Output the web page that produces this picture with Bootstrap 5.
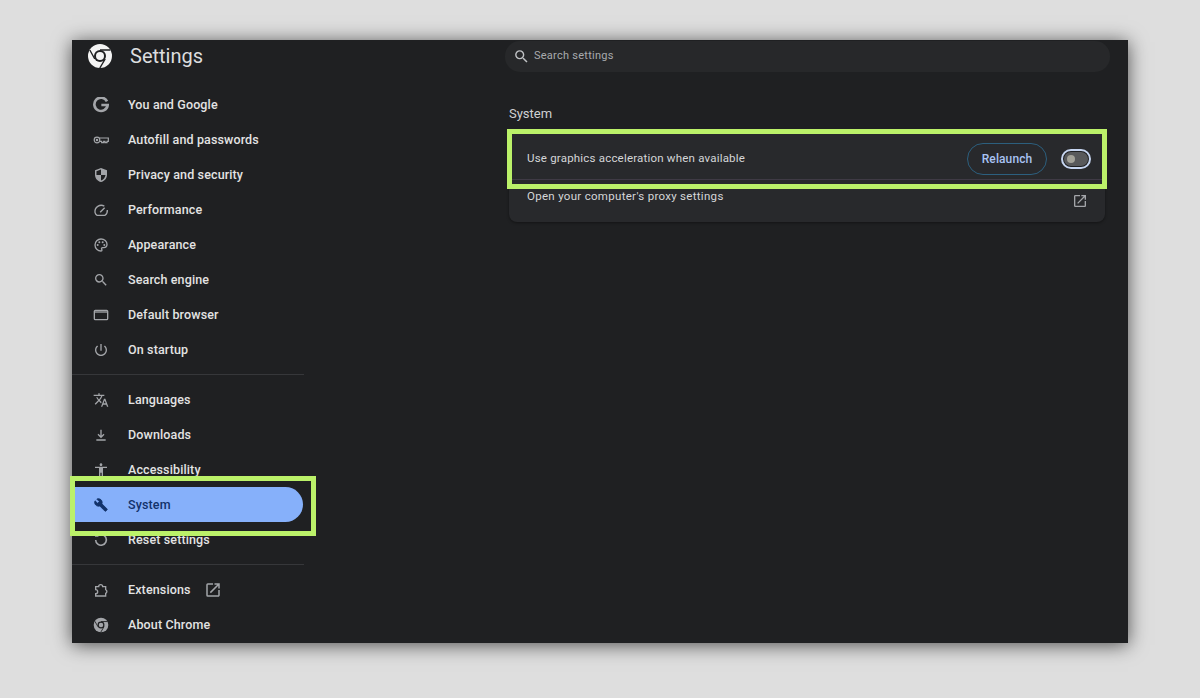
<!DOCTYPE html>
<html lang="en">

<head>
  <meta charset="UTF-8" />
  <meta name="viewport" content="width=device-width, initial-scale=1.0" />
  <title>Settings - System</title>
  <link href="https://cdn.jsdelivr.net/npm/bootstrap@5.3.2/dist/css/bootstrap.min.css" rel="stylesheet" />
  <style>
    html, body { height: 100%; overflow: hidden; }
    body { background: #dedede; font-family: Roboto, "Liberation Sans", sans-serif; padding: 40px 72px 0; }
    .app { height: 603px; background: #1f2022; box-shadow: 0 2px 18px rgba(0, 0, 0, .65); }
    .side { width: 232px; flex: none; }
    .brand { height: 47px; padding: 4px 0 0 16px; gap: 18px; color: #dcdddf; font-size: 20px; line-height: 24px; }
    .side-link { height: 35px; padding: 2px 0 0 21px; color: #e3e3e3; font-size: 12.5px; font-weight: 500; letter-spacing: .13px; text-decoration: none; }
    .side-link svg.ic { width: 16px; height: 16px; margin: -2px 19px 0 0; flex: none; color: #a3a5a9; }
    .side-link.active { margin-right: 1px; background: #86b0fa; color: #12326a; }
    .side-link.active svg.ic { color: #12326a; }
    .side-link .ext { width: 18px; height: 18px; margin: -2px 0 0 13px; color: #a3a5a9; }
    .side hr { margin: 7px 0 7px; border-color: #36373a; opacity: 1; }
    .main-col { padding: 1px 18px 0 201px; min-width: 0; }
    .search { height: 31px; background: #27282a; border-radius: 15px; padding-left: 8px; gap: 4px; color: #a8aaad; font-size: 11px; letter-spacing: .25px; }
    .search svg { width: 17px; height: 17px; margin-top: -1px; color: #c0c2c5; }
    .sec-title { margin: 33px 0 0 4px; height: 27px; color: #cfd0d2; font-size: 13px; line-height: 17px; }
    .set-card { margin: 0 5px 0 4px; height: 90px; background: #28292c; border: 0; border-radius: 8px; box-shadow: 0 1px 3px rgba(0, 0, 0, .4); color: #d5d6d8; font-size: 11.5px; }
    .set-row { height: 48px; padding: 7px 14px 0 18px; border-bottom: 1px solid #3f3a45; letter-spacing: .2px; }
    .set-row2 { padding: 9px 17px 0 18px; line-height: 15px; letter-spacing: .3px; }
    .set-row2 svg { width: 16px; height: 16px; margin-top: 4px; color: #a3a5a9; }
    .btn-relaunch { width: 80px; height: 32px; margin-right: 14px; padding: 0; border: 1px solid #2c5f7e; border-radius: 16px; background: transparent; color: #a8c3f3; font-size: 12px; font-weight: 500; letter-spacing: .1px; }
    .toggle { width: 30px; height: 20px; border: 2px solid #c6d5f0; border-radius: 10px; background: #1f2022; padding: 1px; }
    .toggle i { display: block; height: 100%; border-radius: 7px; background: #58595b; padding: 3px; }
    .toggle b { display: block; width: 8px; height: 8px; border-radius: 50%; background: #a3a299; }
    .hl-box { position: absolute; border: 5px solid #bbf169; pointer-events: none; }
    .hl-nav { left: -2px; top: 436px; width: 246px; height: 60px; }
    .hl-row { left: 435px; top: 89px; width: 600px; height: 60px; }
  </style>
</head>

<body>
  <div class="app d-flex position-relative">
    <!-- Sidebar -->
    <nav class="side d-flex flex-column">
      <div class="brand d-flex align-items-start">
        <svg width="24" height="24" viewBox="0 0 24 24">
          <circle cx="12" cy="12" r="12" fill="#f4f4f4" />
          <circle cx="12" cy="12" r="6" fill="#1f2022" />
          <circle cx="12" cy="12" r="4" fill="#f4f4f4" />
          <path d="M12 6H22.400M6.800 15L1.800 6M17.200 15L11.800 24" stroke="#1f2022" stroke-width="1.400" fill="none" />
        </svg>
        <span>Settings</span>
      </div>

      <a class="side-link d-flex align-items-center" href="#">
        <svg class="ic" viewBox="0 0 24 24" fill="none" stroke="currentColor" stroke-width="4"><path d="M21 6.500A10 10 0 1 0 22 12H12.500" /></svg>
        You and Google</a>
      <a class="side-link d-flex align-items-center" href="#">
        <svg class="ic" viewBox="0 0 24 24" fill="none" stroke="currentColor" stroke-width="1.800"><circle cx="6" cy="12" r="4.200" /><circle cx="6" cy="12" r="1" /><path d="M10 9h13v5h-2v2h-3v-2h-2v2h-3v-2h-3" /></svg>
        Autofill and passwords</a>
      <a class="side-link d-flex align-items-center" href="#">
        <svg class="ic" viewBox="0 0 24 24" fill="currentColor"><path d="M12 1.500L3 5v6.500c0 5.200 3.800 9.900 9 11 5.200-1.100 9-5.800 9-11V5l-9-3.500zm0 10.500h6.800c-.6 3.900-3.200 7.200-6.800 8.300V12H5.200V6.500L12 3.900V12z" /></svg>
        Privacy and security</a>
      <a class="side-link d-flex align-items-center" href="#">
        <svg class="ic" viewBox="0 0 24 24" fill="none" stroke="currentColor" stroke-width="2"><path d="M6 20h12a9 9 0 0 0 3.500-8M17 6.200A9.500 9.500 0 0 0 3 15.500c.4 1.700 1.300 3.300 3 4.500" /><path d="M10.800 15.500L17.500 8.500" /></svg>
        Performance</a>
      <a class="side-link d-flex align-items-center" href="#">
        <svg class="ic" viewBox="0 0 24 24" fill="none" stroke="currentColor" stroke-width="2"><path d="M12 3a9 9 0 0 0 0 18c.83 0 1.500-.67 1.500-1.500 0-.39-.15-.74-.39-1.010-.23-.26-.38-.61-.38-.99 0-.83.67-1.500 1.500-1.500H16c2.760 0 5-2.240 5-5 0-4.420-4.030-8-9-8z" /><g fill="currentColor" stroke="none"><circle cx="7" cy="12" r="1.500" /><circle cx="9.500" cy="8" r="1.500" /><circle cx="14.500" cy="8" r="1.500" /><circle cx="17" cy="12" r="1.500" /></g></svg>
        Appearance</a>
      <a class="side-link d-flex align-items-center" href="#">
        <svg class="ic" viewBox="0 0 24 24" fill="currentColor"><path d="M15.500 14h-.79l-.28-.27A6.471 6.471 0 0 0 16 9.500 6.500 6.500 0 1 0 9.500 16c1.610 0 3.090-.59 4.230-1.570l.27.28v.79l5 4.990L20.490 19l-4.990-5zm-6 0C7.010 14 5 11.990 5 9.500S7.010 5 9.500 5 14 7.010 14 9.500 11.990 14 9.500 14z" /></svg>
        Search engine</a>
      <a class="side-link d-flex align-items-center" href="#">
        <svg class="ic" viewBox="0 0 24 24" fill="none" stroke="currentColor" stroke-width="2"><rect x="2" y="5" width="20" height="14" rx="1.500" /><path d="M2 7.500h20" /></svg>
        Default browser</a>
      <a class="side-link d-flex align-items-center" href="#">
        <svg class="ic" viewBox="0 0 24 24" fill="currentColor"><path d="M13 3h-2v10h2V3zm4.830 2.170l-1.420 1.420C17.990 7.860 19 9.810 19 12c0 3.870-3.130 7-7 7s-7-3.130-7-7c0-2.190 1.010-4.140 2.580-5.420L6.170 5.170C4.230 6.820 3 9.260 3 12c0 4.970 4.030 9 9 9s9-4.030 9-9c0-2.740-1.230-5.180-3.170-6.830z" /></svg>
        On startup</a>

      <hr />

      <a class="side-link d-flex align-items-center" href="#">
        <svg class="ic" viewBox="0 0 24 24" fill="currentColor"><path d="M12.870 15.070l-2.540-2.510.03-.03c1.740-1.940 2.980-4.170 3.710-6.530H17V4h-7V2H8v2H1v1.990h11.170C11.500 7.920 10.440 9.750 9 11.350 8.070 10.320 7.300 9.190 6.690 8h-2c.73 1.630 1.730 3.170 2.980 4.560l-5.090 5.020L4 19l5-5 3.110 3.110.76-2.040zM18.500 10h-2L12 22h2l1.120-3h4.750L21 22h2l-4.500-12zm-2.620 7l1.620-4.330L19.120 17h-3.240z" /></svg>
        Languages</a>
      <a class="side-link d-flex align-items-center" href="#">
        <svg class="ic" viewBox="0 0 24 24" fill="none" stroke="currentColor" stroke-width="2"><path d="M12 4v11M7.500 11l4.500 4.500 4.500-4.500M5 19.500h14" /></svg>
        Downloads</a>
      <a class="side-link d-flex align-items-center" href="#">
        <svg class="ic" viewBox="0 0 24 24" fill="currentColor"><path d="M12 2c1.100 0 2 .9 2 2s-.9 2-2 2-2-.9-2-2 .9-2 2-2zm9 7h-6v13h-2v-6h-2v6H9V9H3V7h18v2z" /></svg>
        Accessibility</a>
      <a class="side-link active d-flex align-items-center rounded-end-pill" href="#">
        <svg class="ic" viewBox="-2 -2 28 28" fill="currentColor" stroke="currentColor" stroke-width="1.500"><path d="M22.700 19l-9.100-9.100c.9-2.300.4-5-1.500-6.900-2-2-5-2.400-7.400-1.300L9 6 6 9 1.600 4.700C.4 7.100.9 10.100 2.900 12.100c1.900 1.900 4.600 2.400 6.900 1.500l9.100 9.100c.4.400 1 .4 1.400 0l2.300-2.300c.5-.4.5-1.100.1-1.400z" /></svg>
        System</a>
      <a class="side-link d-flex align-items-center" href="#">
        <svg class="ic" viewBox="0 0 24 24" fill="none" stroke="currentColor" stroke-width="2.400"><path d="M7 5.500a8 8 0 1 1-3 6.500M7 2v4H3" /></svg>
        Reset settings</a>

      <hr />

      <a class="side-link d-flex align-items-center" href="#">
        <svg class="ic" viewBox="0 0 24 24" fill="none" stroke="currentColor" stroke-width="2"><path d="M4 7h4.500a3 3 0 0 1 6 0H19v4.500a3 3 0 0 1 0 5.500v4H4v-3.500a3 3 0 0 0 0-6z" /></svg>
        Extensions
        <svg class="ext" viewBox="0 0 24 24" fill="currentColor"><path d="M19 19H5V5h7V3H5a2 2 0 0 0-2 2v14a2 2 0 0 0 2 2h14c1.100 0 2-.9 2-2v-7h-2v7zM14 3v2h3.590l-9.830 9.830 1.410 1.410L19 6.410V10h2V3h-7z" /></svg>
      </a>
      <a class="side-link d-flex align-items-center" href="#">
        <svg class="ic" viewBox="0 0 24 24">
          <circle cx="12" cy="12" r="11" fill="currentColor" />
          <circle cx="12" cy="12" r="5.200" fill="#1f2022" />
          <circle cx="12" cy="12" r="3.400" fill="currentColor" />
          <path d="M12 6.800H22M7.500 14.600L2.800 6.400M16.500 14.600L11.500 23" stroke="#1f2022" stroke-width="1.300" fill="none" />
        </svg>
        About Chrome</a>
    </nav>

    <!-- Main column -->
    <main class="main-col flex-grow-1">
      <div class="search d-flex align-items-center">
        <svg viewBox="0 0 24 24" fill="currentColor"><path d="M15.500 14h-.79l-.28-.27A6.471 6.471 0 0 0 16 9.500 6.500 6.500 0 1 0 9.500 16c1.610 0 3.090-.59 4.230-1.570l.27.28v.79l5 4.990L20.490 19l-4.990-5zm-6 0C7.010 14 5 11.990 5 9.500S7.010 5 9.500 5 14 7.010 14 9.500 11.990 14 9.500 14z" /></svg>
        <span>Search settings</span>
      </div>

      <div class="sec-title">System</div>

      <div class="card set-card">
        <div class="set-row d-flex align-items-center">
          <span class="flex-grow-1">Use graphics acceleration when available</span>
          <button type="button" class="btn btn-relaunch">Relaunch</button>
          <span class="toggle"><i><b></b></i></span>
        </div>
        <div class="set-row2 d-flex justify-content-between">
          <span>Open your computer's proxy settings</span>
          <svg viewBox="0 0 24 24" fill="currentColor"><path d="M19 19H5V5h7V3H5a2 2 0 0 0-2 2v14a2 2 0 0 0 2 2h14c1.100 0 2-.9 2-2v-7h-2v7zM14 3v2h3.590l-9.830 9.830 1.410 1.410L19 6.410V10h2V3h-7z" /></svg>
        </div>
      </div>
    </main>

    <!-- Highlight boxes over the screenshot -->
    <div class="hl-box hl-nav"></div>
    <div class="hl-box hl-row"></div>
  </div>

  <script src="https://cdn.jsdelivr.net/npm/bootstrap@5.3.2/dist/js/bootstrap.bundle.min.js"></script>
</body>

</html>
